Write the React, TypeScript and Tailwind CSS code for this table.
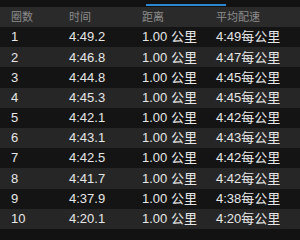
import React from "react";

const rows = [
  ["1", "4:49.2", "1.00 公里", "4:49每公里"],
  ["2", "4:46.8", "1.00 公里", "4:47每公里"],
  ["3", "4:44.8", "1.00 公里", "4:45每公里"],
  ["4", "4:45.3", "1.00 公里", "4:45每公里"],
  ["5", "4:42.1", "1.00 公里", "4:42每公里"],
  ["6", "4:43.1", "1.00 公里", "4:43每公里"],
  ["7", "4:42.5", "1.00 公里", "4:42每公里"],
  ["8", "4:41.7", "1.00 公里", "4:42每公里"],
  ["9", "4:37.9", "1.00 公里", "4:38每公里"],
  ["10", "4:20.1", "1.00 公里", "4:20每公里"],
];

export default function App() {
  return (
    <div
      className="w-[300px] h-[240px] bg-[#121212] overflow-hidden text-[#e6e6e6]"
      style={{ fontFamily: '"Liberation Sans", "Noto Sans CJK SC", sans-serif' }}
    >
      <div className="h-[7px] flex items-end">
        <div className="ml-[146px] w-[80px] h-[2px] mb-[1px] bg-[#2b87d1]" />
      </div>
      <div className="h-[20px] bg-[#2a2a2a] flex items-center text-[11px] text-[#8c8c8c]">
        <div className="w-[69px] pl-[11px]">圈数</div>
        <div className="w-[73px]">时间</div>
        <div className="w-[74px]">距离</div>
        <div>平均配速</div>
      </div>
      {rows.map((r, i) => (
        <div
          key={i}
          className={`h-[20.2px] flex items-center text-[13px] ${i % 2 === 0 ? "bg-[#141414]" : "bg-[#262626]"}`}
        >
          <div className="w-[69px] pl-[11px]">{r[0]}</div>
          <div className="w-[73px]">{r[1]}</div>
          <div className="w-[74px]">{r[2]}</div>
          <div>{r[3]}</div>
        </div>
      ))}
    </div>
  );
}
